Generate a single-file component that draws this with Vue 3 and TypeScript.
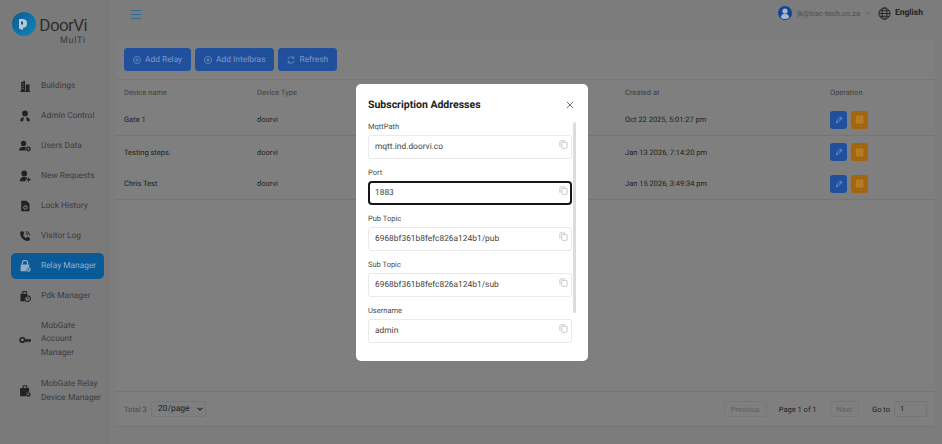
<script setup lang="ts">
interface NavItem { label: string[]; icon: string; active?: boolean }
const nav: NavItem[] = [
  { label: ['Buildings'], icon: 'building' },
  { label: ['Admin Control'], icon: 'admin' },
  { label: ['Users Data'], icon: 'users' },
  { label: ['New Requests'], icon: 'request' },
  { label: ['Lock History'], icon: 'history' },
  { label: ['Visitor Log'], icon: 'phone' },
  { label: ['Relay Manager'], icon: 'lock', active: true },
  { label: ['Pdk Manager'], icon: 'pdk' },
  { label: ['MobGate', 'Account', 'Manager'], icon: 'key' },
  { label: ['MobGate Relay', 'Device Manager'], icon: 'case' },
]
const rows = [
  { name: 'Gate 1', type: 'doorvi', created: 'Oct 22 2025, 5:01:27 pm' },
  { name: 'Testing steps.', type: 'doorvi', created: 'Jan 13 2026, 7:14:20 pm' },
  { name: 'Chris Test', type: 'doorvi', created: 'Jan 15 2026, 3:49:34 pm' },
]
const fields = [
  { label: 'MqttPath', value: 'mqtt.ind.doorvi.co' },
  { label: 'Port', value: '1883', focus: true },
  { label: 'Pub Topic', value: '6968bf361b8fefc826a124b1/pub' },
  { label: 'Sub Topic', value: '6968bf361b8fefc826a124b1/sub' },
  { label: 'Username', value: 'admin' },
]
</script>

<template>
  <div class="app">
    <aside class="side">
      <div class="logo">
        <svg class="logo-mark" viewBox="0 0 24 24" width="24" height="24">
          <defs>
            <linearGradient id="lg" x1="0" y1="0" x2="1" y2="1">
              <stop offset="0" stop-color="#0b5a96" />
              <stop offset="1" stop-color="#0f86b8" />
            </linearGradient>
          </defs>
          <circle cx="12" cy="12" r="12" fill="url(#lg)" />
          <path d="M7 7h4a4.300 4.300 0 0 1 4 4.500 4.300 4.300 0 0 1-4 4.300V18l-4-1.500z" fill="#b9c8d4" />
          <rect x="9" y="9.500" width="2" height="3" fill="#0b5f96" />
        </svg>
        <div class="logo-text">
          <span class="logo-main">DoorVi</span>
          <span class="logo-sub">MulTi</span>
        </div>
      </div>
      <nav class="nav">
        <a v-for="n in nav" :key="n.icon" class="nav-item" :class="{ active: n.active, multi: n.label.length > 1 }">
          <svg class="nav-icon" viewBox="0 0 16 16" width="12" height="12">
            <g v-if="n.icon === 'building'">
              <path d="M3 3l5-2v14H3zM9 6h5v9H9zM1 15h14v1H1z" />
              <path d="M4.500 5h2v1h-2zM4.500 8h2v1h-2zM4.500 11h2v1h-2z" class="cut" />
            </g>
            <g v-else-if="n.icon === 'admin'">
              <circle cx="8" cy="4.500" r="3.800" /><path d="M1.500 15c0-4 2-5.500 5-5.500L5.500 15zM14.500 15c0-4-2-5.500-5-5.500l1 5.500z" />
            </g>
            <g v-else-if="n.icon === 'users'">
              <circle cx="6" cy="4.500" r="3.500" /><path d="M0 14c0-3 2.500-5 6-5 1.500 0 2.500.3 3.500 1-1 1-1 3-.5 4z" />
              <circle cx="12.500" cy="12" r="3.200" /><circle cx="12.500" cy="12" r="1.200" class="cut" />
            </g>
            <g v-else-if="n.icon === 'request'">
              <circle cx="7" cy="4.500" r="3.800" /><path d="M1 15c0-3.500 2.500-6 6-6 1.500 0 2.500.4 3.500 1v2H9v3z" />
              <path d="M12 10h1.500v2H15.500v1.500h-2v2H12v-2h-2V12h2z" />
            </g>
            <g v-else-if="n.icon === 'history'">
              <path d="M3 1h7l4 4v10H3z" /><circle cx="8.500" cy="10" r="3" class="cut" /><circle cx="8.500" cy="10" r="1.500" />
            </g>
            <g v-else-if="n.icon === 'phone'">
              <path d="M3 1.500l3 .5 1 3-1.500 1.500c.7 1.800 2 3.200 4 4.200L11 9l3 1 .5 3c-.5 1-1.500 1.700-3 1.500C6 14 2 9.500 1.500 4.500 1.500 3 2 2 3 1.500z" />
              <path d="M9 2a5 5 0 0 1 5 5" fill="none" stroke-width="1.200" class="stroke" />
              <path d="M9 4.500A2.600 2.600 0 0 1 11.500 7" fill="none" stroke-width="1.200" class="stroke" />
            </g>
            <g v-else-if="n.icon === 'lock'">
              <path d="M4.500 6V4a3.500 3.500 0 0 1 7 0v2" fill="none" stroke-width="1.600" class="stroke" />
              <path d="M2.500 6h11v3.500a4 4 0 0 0-4 5.500h-7.500z" /><circle cx="12.500" cy="12.500" r="3" /><circle cx="12.500" cy="12.500" r="1.200" class="cut" />
            </g>
            <g v-else-if="n.icon === 'pdk'">
              <path d="M5 5V3a1 1 0 0 1 1-1h3a1 1 0 0 1 1 1v2" fill="none" stroke-width="1.500" class="stroke" />
              <path d="M2 5h9v3a4.500 4.500 0 0 0-3 7H2z" /><circle cx="11.500" cy="11.500" r="3.700" fill="none" stroke-width="1.400" class="stroke" />
              <path d="M11.500 9.500v2.200l1.500.8" fill="none" stroke-width="1" class="stroke" />
            </g>
            <g v-else-if="n.icon === 'key'">
              <circle cx="4.500" cy="8" r="3" fill="none" stroke-width="2.200" class="stroke" />
              <path d="M7.500 7H16v2.500h-1.500V11h-2V9.500H11V11H9V9.500H7.500z" />
            </g>
            <g v-else>
              <path d="M5.500 4V2a1 1 0 0 1 1-1h3a1 1 0 0 1 1 1v2" fill="none" stroke-width="1.500" class="stroke" />
              <path d="M1.500 4h12v5a4 4 0 0 0-4 6h-8z" /><circle cx="12.500" cy="12.500" r="3" /><circle cx="12.500" cy="12.500" r="1.200" class="cut" />
            </g>
          </svg>
          <span class="nav-label"><span v-for="l in n.label" :key="l" class="nav-line">{{ l }}</span></span>
        </a>
      </nav>
    </aside>

    <div class="main">
      <header class="top">
        <svg class="burger" viewBox="0 0 10 9" width="10" height="9">
          <path d="M0 .5h10M0 4.500h10M0 8.500h10" stroke="#2f6c96" stroke-width="1" />
        </svg>
        <div class="top-right">
          <svg viewBox="0 0 14 14" width="14" height="14">
            <circle cx="7" cy="7" r="7" fill="#12459a" />
            <circle cx="7" cy="5" r="2.600" fill="#a9b5c9" />
            <path d="M2.800 11.500c.4-2.700 2.200-3.700 4.200-3.700s3.800 1 4.200 3.700A6 6 0 0 1 7 13a6 6 0 0 1-4.200-1.500z" fill="#a9b5c9" />
          </svg>
          <span class="email">jk@trac-tech.co.za</span>
          <svg viewBox="0 0 8 5" width="5" height="4" class="chev"><path d="M1 1l3 3 3-3" fill="none" stroke="#555" stroke-width="1" /></svg>
          <svg class="globe" viewBox="0 0 14 14" width="13" height="13" fill="none" stroke="#1e1e1e" stroke-width="1">
            <circle cx="7" cy="7" r="6" /><ellipse cx="7" cy="7" rx="2.700" ry="6" /><path d="M1 7h12M1.800 4h10.400M1.800 10h10.400" />
          </svg>
          <span class="lang">English</span>
        </div>
      </header>

      <section class="panel">
        <div class="toolbar">
          <button class="btn">
            <svg viewBox="0 0 12 12" width="8" height="8" fill="none" stroke="#7f9ccb" stroke-width="1"><circle cx="6" cy="6" r="5.300" /><path d="M6 3.200v5.600M3.200 6h5.600" /></svg>
            Add Relay
          </button>
          <button class="btn">
            <svg viewBox="0 0 12 12" width="8" height="8" fill="none" stroke="#7f9ccb" stroke-width="1"><circle cx="6" cy="6" r="5.300" /><path d="M6 3.200v5.600M3.200 6h5.600" /></svg>
            Add Intelbras
          </button>
          <button class="btn">
            <svg viewBox="0 0 12 12" width="8" height="8" fill="none" stroke="#7f9ccb" stroke-width="1.100"><path d="M1.200 5A5 5 0 0 1 10 3.200M10.800 7A5 5 0 0 1 2 8.800" /><path d="M10.300 .8v2.700H7.600M1.700 11.200V8.500h2.700" /></svg>
            Refresh
          </button>
        </div>

        <div class="row head">
          <span>Device name</span><span>Device Type</span><span></span><span>Created at</span><span>Operation</span>
        </div>
        <div v-for="r in rows" :key="r.name" class="row body">
          <span>{{ r.name }}</span><span>{{ r.type }}</span><span></span><span>{{ r.created }}</span>
          <span class="ops">
            <button class="op blue">
              <svg viewBox="0 0 12 12" width="8" height="8" fill="none" stroke="#8fa6cd" stroke-width="1.100"><path d="M2 10l.5-2.500L8.500 1.500l2 2-6 6zM7.500 2.500l2 2" /></svg>
            </button>
            <button class="op orange">
              <svg viewBox="0 0 12 12" width="9" height="9" fill="none" stroke="#c9994f" stroke-width="1"><rect x="1.500" y="1.500" width="3.800" height="3.800" rx="1" /><rect x="6.700" y="1.500" width="3.800" height="3.800" rx="1" /><rect x="1.500" y="6.700" width="3.800" height="3.800" rx="1" /><rect x="6.700" y="6.700" width="3.800" height="3.800" rx="1" /></svg>
            </button>
          </span>
        </div>

        <div class="spacer"></div>

        <footer class="foot">
          <span class="total">Total 3</span>
          <span class="size-wrap">
            <select class="size"><option>20/page</option></select>
            <svg class="size-chev" viewBox="0 0 8 5" width="6" height="4"><path d="M1 1l3 3 3-3" fill="none" stroke="#1c1c1c" stroke-width="1.400" /></svg>
          </span>
          <div class="pager">
            <button class="pg prev">Previous</button>
            <span class="pg-text">Page 1 of 1</span>
            <button class="pg next">Next</button>
            <span class="goto">Go to</span>
            <span class="goto-box">1</span>
          </div>
        </footer>
      </section>
    </div>

    <div class="overlay">
      <div class="modal">
        <div class="modal-head">
          <h2 class="modal-title">Subscription Addresses</h2>
          <svg viewBox="0 0 10 10" width="8" height="8" class="close"><path d="M1 1l8 8M9 1l-8 8" stroke="#555" stroke-width="1" /></svg>
        </div>
        <div class="modal-body">
          <div class="thumb"></div>
          <div v-for="f in fields" :key="f.label" class="field">
            <label class="field-label">{{ f.label }}</label>
            <div class="input" :class="{ focus: f.focus }">
              <span>{{ f.value }}</span>
              <svg class="copy" viewBox="0 0 10 10" width="9" height="9" fill="none" stroke="#b4b4b4" stroke-width=".8">
                <rect x="3" y="2.700" width="6" height="6.600" rx="1" />
                <path d="M7 1H2a1 1 0 0 0-1 1v5.500" />
              </svg>
            </div>
          </div>
        </div>
      </div>
    </div>
  </div>
</template>

<style>
html, body { margin: 0; padding: 0; }
</style>

<style scoped>
.app {
  display: flex;
  width: 942px;
  height: 444px;
  overflow: hidden;
  background: #7c7c7c;
  font-family: Roboto, "Liberation Sans", sans-serif;
  font-size: 8.400px;
  color: #2e2e2e;
  text-rendering: geometricPrecision;
}
.side {
  width: 108px;
  flex: none;
  background: #7a7a7a;
  border-right: 1px solid #767676;
}
.logo {
  display: flex;
  gap: 4px;
  padding: 12px 0 0 12px;
  height: 59px;
  box-sizing: border-box;
}
.logo-mark { flex: none; }
.logo-text { display: flex; flex-direction: column; align-items: flex-end; width: 47px; margin-top: 4px; }
.logo-main { font-size: 17px; line-height: 20px; letter-spacing: -.6px; color: #2d2d2d; white-space: nowrap; }
.logo-sub { font-size: 9px; line-height: 11px; letter-spacing: .7px; color: #383838; margin-right: 1px; }
.nav { display: flex; flex-direction: column; padding: 14px 4px 0 11px; }
.nav-item {
  display: flex;
  align-items: center;
  min-height: 26px;
  margin-bottom: 4px;
  padding-left: 8px;
  border-radius: 5px;
  color: #3c3c3c;
}
.nav-item.multi { margin-top: 6px; margin-bottom: 11px; }
.nav-item.active { background: #0a5a97; color: #8eb2d1; }
.nav-icon { flex: none; margin-right: 10px; fill: #222; stroke: none; }
.nav-item.active .nav-icon { fill: #94adc4; }
.nav-icon .cut { fill: #7a7a7a; }
.nav-icon .stroke { fill: none; stroke: #222; }
.nav-item.active .nav-icon .cut { fill: #0a5a97; }
.nav-item.active .nav-icon .stroke { stroke: #94adc4; }
.nav-label { display: flex; flex-direction: column; line-height: 13.400px; padding-top: 1px; }
.nav-line { white-space: nowrap; }

.main { flex: 1; display: flex; flex-direction: column; min-width: 0; padding: 0 7px 17px 7px; }
.top { height: 26px; display: flex; align-items: center; justify-content: space-between; padding: 0 12px 0 15px; flex: none; }
.burger { margin-top: 2px; }
.top-right { display: flex; align-items: center; }
.email { margin-left: 5px; font-size: 7.500px; font-weight: 500; color: #575757; }
.chev { margin-left: 5px; }
.globe { margin-left: 8px; }
.lang { margin-left: 4px; font-size: 8.500px; font-weight: 700; color: #1f1f1f; }

.panel {
  flex: 1;
  margin-top: 14px;
  background: #7f7f7f;
  border-radius: 4px;
  display: flex;
  flex-direction: column;
}
.toolbar { display: flex; gap: 4px; padding: 8px; height: 40px; box-sizing: border-box; border-bottom: 1px solid #777; }
.btn {
  height: 23px;
  display: inline-flex;
  align-items: center;
  gap: 4px;
  padding: 0 8px;
  border: 1px solid #22509c;
  border-radius: 3px;
  background: #204f9c;
  color: #8099c6;
  font: 8.400px Roboto, sans-serif;
  text-rendering: geometricPrecision;
}
.row {
  display: grid;
  grid-template-columns: 133px 133px 235px 205px 1fr;
  align-items: center;
  padding: 0 8px;
  font-size: 7.500px;
}
.head { height: 24px; color: #404040; }
.body { height: 32px; color: #222; border-bottom: 1px solid #757575; box-sizing: border-box; }
.row.body:nth-child(4) { border-bottom: 0; }
.ops { display: flex; gap: 4px; }
.op { width: 17px; height: 18px; padding: 0; border: 0; border-radius: 3px; display: flex; align-items: center; justify-content: center; }
.blue { background: #204f9c; }
.orange { background: #a2670c; }
.spacer { flex: 1; }
.foot {
  height: 36px;
  display: flex;
  align-items: center;
  padding: 0 8px;
  border-top: 1px solid #757575;
  border-bottom: 1px solid #757575;
  box-sizing: border-box;
  color: #4a4a4a;
  font-size: 7.500px;
}
.total { margin-right: 4px; }
.size-wrap { position: relative; display: flex; }
.size {
  width: 55px;
  height: 16px;
  padding: 0 0 0 6px;
  border: 1px solid #767676;
  border-radius: 2px;
  background: #7f7f7f;
  color: #222;
  font: 8.500px Roboto, sans-serif;
  text-rendering: geometricPrecision;
  appearance: none;
}
.size-chev { position: absolute; right: 3px; top: 6px; pointer-events: none; }
.pager { margin-left: auto; display: flex; align-items: center; color: #222; }
.pg { height: 16px; padding: 0 6px; border: 1px solid #777; border-radius: 3px; background: transparent; color: #5f5f5f; font: 7.500px Roboto, sans-serif; text-rendering: geometricPrecision; }
.pg-text { margin: 0 13px 0 12px; }
.goto { margin: 0 4px 0 13px; }
.goto-box { width: 33px; height: 16px; box-sizing: border-box; border: 1px solid #757575; border-radius: 2px; padding-left: 5px; line-height: 14px; }

.overlay {
  position: fixed;
  inset: 0;
  display: flex;
  align-items: flex-start;
  justify-content: center;
  padding: 84px 0 0 2px;
  box-sizing: border-box;
}
.modal {
  width: 232px;
  height: 277px;
  box-sizing: border-box;
  padding: 14px 12px 0;
  background: #fff;
  border-radius: 5px;
}
.modal-head { display: flex; align-items: center; justify-content: space-between; height: 13px; padding-right: 2px; }
.modal-title { margin: 0; font-size: 10.500px; font-weight: 700; color: #1c1c1c; }
.close { flex: none; }
.modal-body { position: relative; display: flex; flex-direction: column; gap: 8px; margin: 10px 4px 0 0; }
.thumb { position: absolute; right: -4px; top: 1px; width: 3px; height: 191px; border-radius: 2px; background: #dcdcdc; }
.field { display: flex; flex-direction: column; }
.field-label { height: 14px; line-height: 12px; font-size: 7.500px; color: #4d4d4d; }
.input {
  position: relative;
  height: 24px;
  box-sizing: border-box;
  border: 1px solid #eaeaea;
  border-radius: 3px;
  padding: 0 6px;
  display: flex;
  align-items: center;
  font-size: 8.400px;
  color: #454545;
}
.input.focus { border: 2px solid #151515; padding: 0 5px; border-radius: 4px; }
.copy { position: absolute; right: 3px; top: 4px; }
.input.focus .copy { right: 2px; top: 3px; }
</style>
